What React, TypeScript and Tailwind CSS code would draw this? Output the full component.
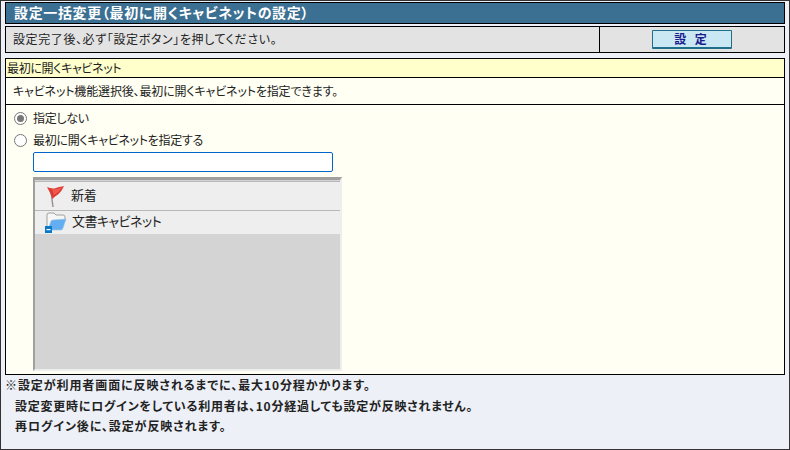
const jp = "font-['Noto_Sans_CJK_JP','Liberation_Sans',sans-serif]";

function FlagIcon() {
  return (
    <svg width="20" height="24" viewBox="0 0 20 24">
      <path d="M5 8 L7 23" stroke="#9a8f8f" strokeWidth="1.4" fill="none" />
      <path d="M1 3 C4 4.5 7 5 10 4 C13 3 16 2.5 18 2 C16.5 5 15 8 12 10.5 C10 12 8 13 6.5 15 C5.5 11 3 7 1 3 Z" fill="#df3a32" />
      <path d="M6 5 C9 6 12 4.5 16 3.5 C14 7 11 9 8 11 Z" fill="#ee5a50" />
    </svg>
  );
}

function FolderIcon() {
  return (
    <svg width="22" height="24" viewBox="0 0 22 24">
      <path d="M2 17 L2 4 Q2 2 4 2 L9 2 L11 4 L18 4 Q20 4 20 6 L20 10 L3 18 Z" fill="#f6f6f6" stroke="#a0a0a0" strokeWidth="1" />
      <path d="M3 19 L6 10 Q6.5 9 8 9 L21 8 L18 17 Q17.5 19 16 19 Z" fill="#62aef0" stroke="#9cc4e4" strokeWidth="0.6" />
      <rect x="0" y="15" width="7" height="7" fill="#0a78c8" />
      <rect x="1.5" y="18" width="4" height="1.2" fill="#fff" />
    </svg>
  );
}

export default function App() {
  return (
    <div className={`${jp} w-[790px] h-[450px] box-border border border-[#333] bg-[#edf0f6] px-1 pt-px text-xs text-[#222] [font-feature-settings:'palt']`}>
      <div className="h-[22px] border border-black bg-[#3c7093] pl-2 pb-0.5 flex items-center text-sm font-bold text-white tracking-[0.65px]">
        設定一括変更（最初に開くキャビネットの設定）
      </div>
      <div className="mt-0.5 h-[27px] border border-black bg-[#e3e3e3] flex">
        <div className="flex-1 pl-[7px] pb-0.5 flex items-center tracking-[0.6px]">設定完了後、必ず「設定ボタン」を押してください。</div>
        <div className="w-[185px] border-l border-black flex items-center justify-center">
          <button className="w-[80px] h-[19px] border border-[#1f6f8b] border-b-2 rounded-[1px] bg-[#c9e8f4] text-[#1a1a8c] font-bold flex items-center justify-center tracking-[3px]">
            設 定
          </button>
        </div>
      </div>
      <div className="mt-[5px] h-[317px] border border-black bg-[#fffff3] flex flex-col">
        <div className="h-[19px] bg-[#ffffcc] border-b border-black pl-px flex items-center tracking-[-0.35px]">最初に開くキャビネット</div>
        <div className="h-[27px] border-b border-black pl-[7px] flex items-center tracking-[-0.15px]">キャビネット機能選択後、最初に開くキャビネットを指定できます。</div>
        <div className="pl-2 pt-0.5 tracking-[-0.3px]">
          <div className="h-[22px] flex items-center gap-1.5">
            <span className="w-[13px] h-[13px] rounded-full border border-[#777] bg-white flex items-center justify-center">
              <span className="w-[7px] h-[7px] rounded-full bg-[#777]" />
            </span>
            指定しない
          </div>
          <div className="h-[22px] flex items-center gap-1.5">
            <span className="w-[13px] h-[13px] rounded-full border border-[#777] bg-white" />
            最初に開くキャビネットを指定する
          </div>
          <input className="block ml-[19px] mt-px w-[300px] h-5 box-border border border-[#0066cc] rounded-[2px] bg-white" />
          <div className="ml-[19px] mt-[5px] w-[309px] h-[194px] border-t-[3px] border-l-[2px] border-[#a0a0a0] border-r-2 border-r-[#eeeeee] border-b-2 border-b-[#eeeeee] bg-[#d4d4d4]">
            <div className="h-[30px] mt-px border-t border-b border-[#b8b8b8] bg-[#eeeeee] flex items-center pl-[11px] gap-[5px] text-[13px]">
              <FlagIcon />
              <span className="mb-[3px]">新着</span>
            </div>
            <div className="h-[23px] bg-[#eeeeee] flex items-center pl-[10px] gap-[5px] text-[13px] tracking-[-0.55px]">
              <FolderIcon />
              <span className="mb-[3px]">文書キャビネット</span>
            </div>
          </div>
        </div>
      </div>
      <div className="font-bold text-[#222] leading-[20.5px]">
        <p className="tracking-[0.9px]">※設定が利用者画面に反映されるまでに、最大10分程かかります。</p>
        <p className="pl-[10px] tracking-[0.75px]">設定変更時にログインをしている利用者は、10分経過しても設定が反映されません。</p>
        <p className="pl-[10px] tracking-[0.9px]">再ログイン後に、設定が反映されます。</p>
      </div>
    </div>
  );
}
